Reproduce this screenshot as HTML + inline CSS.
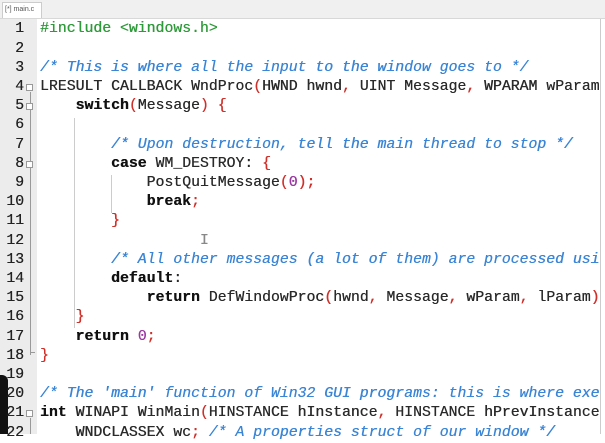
<!DOCTYPE html>
<html><head><style>
body{margin:0;width:605px;height:434px;overflow:hidden;background:#fff;position:relative;font-family:"Liberation Mono",monospace;}
.tabbar{position:absolute;left:0;top:0;width:605px;height:18px;background:#f0f0f0;border-bottom:1px solid #d8d8d8}
.tab{position:absolute;left:2px;top:2px;width:40px;height:16px;background:#fff;border:1px solid #ccc;border-bottom:none;font:7px "Liberation Sans",sans-serif;color:#555;line-height:14px;padding-left:2px;box-sizing:border-box}
.gut{position:absolute;left:0;top:19px;width:37px;height:415px;background:#ececec}
.fold{position:absolute;left:30px;width:1px;background:#999}
.box{position:absolute;left:26px;width:7px;height:7px;border:1px solid #999;background:#fff;box-sizing:border-box}
.ln{position:absolute;left:0;width:24px;text-align:right;font-size:14.8px;color:#222;line-height:19.2px;text-shadow:0.3px 0 0 #222}
.cl{position:absolute;left:40px;font-size:14.8px;line-height:19.2px;white-space:pre;color:#2a2a2a;text-shadow:0.3px 0 0 currentColor}
.k{font-weight:bold;color:#111}.c{color:#3a85d6;font-style:italic}.p{color:#2f9a3a}.r{color:#d0302a}.n{color:#9a3aa0}
.guide{position:absolute;width:1px;background:#ccc}
</style></head><body>
<div class="tabbar"><div class="tab">[*] main.c</div></div>
<div class="gut"></div>
<div class="fold" style="top:92px;height:263px"></div>
<div class="fold" style="top:418px;height:16px"></div>
<div class="box" style="top:84px"></div>
<div class="box" style="top:103px"></div>
<div class="box" style="top:161px"></div>
<div class="box" style="top:410px"></div>
<div class="fold" style="top:352px;height:1px;width:5px"></div>
<div class="guide" style="left:74px;top:118px;height:210px"></div>
<div class="guide" style="left:111px;top:175px;height:38px"></div>
<div style="position:absolute;left:0;top:375px;width:8px;height:59px;background:#111;border-radius:0 6px 0 0"></div>
<div style="position:absolute;left:600px;top:19px;width:1px;height:415px;background:#ccc"></div>
<div class="ln" style="top:20.4px">1</div><div class="cl" style="top:20.4px"><span class="p">#include &lt;windows.h&gt;</span></div>
<div class="ln" style="top:39.6px">2</div>
<div class="ln" style="top:58.8px">3</div><div class="cl" style="top:58.8px"><span class="c">/* This is where all the input to the window goes to */</span></div>
<div class="ln" style="top:78px">4</div><div class="cl" style="top:78px">LRESULT CALLBACK WndProc<span class="r">(</span>HWND hwnd<span class="r">,</span> UINT Message<span class="r">,</span> WPARAM wParam</div>
<div class="ln" style="top:97.2px">5</div><div class="cl" style="top:97.2px">    <span class="k">switch</span><span class="r">(</span>Message<span class="r">)</span> <span class="r">{</span></div>
<div class="ln" style="top:116.4px">6</div>
<div class="ln" style="top:135.6px">7</div><div class="cl" style="top:135.6px">        <span class="c">/* Upon destruction, tell the main thread to stop */</span></div>
<div class="ln" style="top:154.8px">8</div><div class="cl" style="top:154.8px">        <span class="k">case</span> WM_DESTROY: <span class="r">{</span></div>
<div class="ln" style="top:174px">9</div><div class="cl" style="top:174px">            PostQuitMessage<span class="r">(</span><span class="n">0</span><span class="r">)</span><span class="r">;</span></div>
<div class="ln" style="top:193.2px">10</div><div class="cl" style="top:193.2px">            <span class="k">break</span><span class="r">;</span></div>
<div class="ln" style="top:212.4px">11</div><div class="cl" style="top:212.4px">        <span class="r">}</span></div>
<div class="ln" style="top:231.6px">12</div><div class="cl" style="top:231.6px;color:#888">                  I</div>
<div class="ln" style="top:250.8px">13</div><div class="cl" style="top:250.8px">        <span class="c">/* All other messages (a lot of them) are processed usi</span></div>
<div class="ln" style="top:270px">14</div><div class="cl" style="top:270px">        <span class="k">default</span>:</div>
<div class="ln" style="top:289.2px">15</div><div class="cl" style="top:289.2px">            <span class="k">return</span> DefWindowProc<span class="r">(</span>hwnd<span class="r">,</span> Message<span class="r">,</span> wParam<span class="r">,</span> lParam<span class="r">)</span></div>
<div class="ln" style="top:308.4px">16</div><div class="cl" style="top:308.4px">    <span class="r">}</span></div>
<div class="ln" style="top:327.6px">17</div><div class="cl" style="top:327.6px">    <span class="k">return</span> <span class="n">0</span><span class="r">;</span></div>
<div class="ln" style="top:346.8px">18</div><div class="cl" style="top:346.8px"><span class="r">}</span></div>
<div class="ln" style="top:366px">19</div>
<div class="ln" style="top:385.2px">20</div><div class="cl" style="top:385.2px"><span class="c">/* The 'main' function of Win32 GUI programs: this is where exe</span></div>
<div class="ln" style="top:404.4px">21</div><div class="cl" style="top:404.4px"><span class="k">int</span> WINAPI WinMain<span class="r">(</span>HINSTANCE hInstance<span class="r">,</span> HINSTANCE hPrevInstance</div>
<div class="ln" style="top:423.6px">22</div><div class="cl" style="top:423.6px">    WNDCLASSEX wc<span class="r">;</span> <span class="c">/* A properties struct of our window */</span></div>
</body></html>
